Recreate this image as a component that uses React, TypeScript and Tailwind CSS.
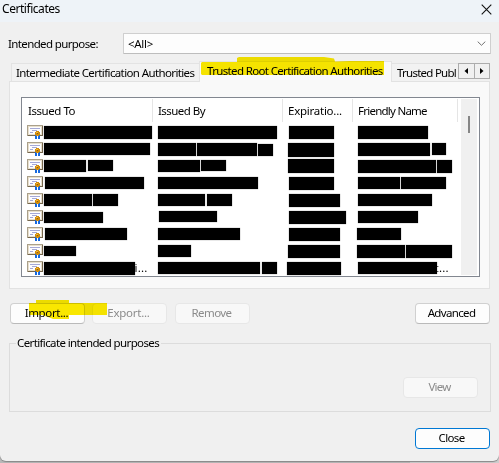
import type { ReactNode } from "react";

type Bar = [left: number, right: number, top: number, bottom: number];
type Row = { to: Bar[]; by: Bar[]; exp: Bar[]; name: Bar[]; toTail?: string; nameTail?: string };

const rows: Row[] = [
  { to: [[44, 152, 126, 139]], by: [[157.5, 277, 126, 138.6]], exp: [[289, 333.6, 126, 138.6]], name: [[358, 427.6, 126, 139]] },
  { to: [[44, 150, 143.4, 155.5]], by: [[157.5, 196.4, 143, 155.7], [197.5, 257.2, 143, 155.7], [258.4, 272.6, 144, 156]], exp: [[288.2, 334, 143, 157]], name: [[358, 430, 142.7, 155.6], [431.6, 446.4, 142.7, 155.5]] },
  { to: [[44, 85.8, 160, 171.7], [88, 112.8, 160, 171.4]], by: [[158, 200, 160.3, 171.7], [201, 226.4, 160, 171.4]], exp: [[288, 334.4, 159.4, 173.4]], name: [[357.6, 436, 159.6, 172.6], [437.4, 451.6, 160.4, 172.6]] },
  { to: [[45, 143.5, 176.6, 188.9]], by: [[157.6, 257.6, 176.6, 189.3]], exp: [[288.5, 333.5, 176.6, 190]], name: [[358, 399.5, 177, 189.4], [401, 446, 177, 189.4]] },
  { to: [[44, 92, 194, 205.8], [93.2, 118, 194, 205.6]], by: [[158, 205.3, 194, 205.8], [206.7, 232.4, 194, 206]], exp: [[288.5, 340, 194, 207]], name: [[358, 432.4, 194, 206]] },
  { to: [[44.4, 103, 211.5, 222.7]], by: [[158.5, 217, 211.3, 222.5]], exp: [[288.5, 346, 210.8, 223.7]], name: [[358, 417.7, 210.6, 223.3]] },
  { to: [[44.6, 126.6, 228.4, 239.8]], by: [[157.8, 240.5, 228.2, 240.3]], exp: [[288.5, 340, 228, 241.3]], name: [[357, 401, 228, 240.4]] },
  { to: [[44, 75.6, 245.8, 256.3]], by: [[158.4, 190.9, 245, 256.7]], exp: [[287.5, 340.2, 244.6, 258]], name: [[357, 404.8, 245.2, 258], [406.2, 452, 245.2, 258.4]] },
  { to: [[44, 134.5, 262, 274.5]], by: [[157.6, 260.5, 261.6, 274.4], [262.2, 277.4, 261.6, 274.4]], exp: [[287, 341, 262, 275]], name: [[358, 436.6, 262, 274.4]], toTail: "i...", nameTail: "t..." },
];

function Bars({ bars, from, top }: { bars: Bar[]; from: number; top: number }) {
  return (
    <>
      {bars.map((b, i) => (
        <i
          key={i}
          className="relative block shrink-0 bg-black shadow-[0_0_1px_#777]"
          style={{
            marginLeft: b[0] - (i === 0 ? from : bars[i - 1][1]),
            marginTop: b[2] - top,
            width: b[1] - b[0],
            height: b[3] - b[2],
          }}
        />
      ))}
    </>
  );
}

function CertIcon() {
  return (
    <svg width="16" height="15" viewBox="0 0 16 15" shapeRendering="crispEdges" className="mt-px ml-[5px] shrink-0">
      <rect width="16" height="11" fill="#aaa08b" />
      <path d="M15 1h1v10H1v-1h14z" fill="#75664d" />
      <rect x="1" y="1" width="14" height="9" fill="#e8dfcc" />
      <rect x="2" y="2" width="12" height="7" fill="#fdfdff" />
      <path d="M3 3h10v1H3zM5 5h5v1H5zM3 7h3v1H3z" fill="#a5a9d6" />
      <path d="M8 10h2v4H8zM11 10h2v4h-2z" fill="#1769df" />
      <path d="M9 6h3v1h1v3h-1v1H9v-1H8V7h1z" fill="#cf8b0d" />
      <path d="M9 7h2v1H9z" fill="#f1b52f" />
      <path d="M10 8h1v1h-1z" fill="#895b0b" />
    </svg>
  );
}

function Button({ children, kind = "normal", spacing = "" }: { children: ReactNode; kind?: "normal" | "off" | "default"; spacing?: string }) {
  const look =
    kind === "off"
      ? "border-[#e7e7e7] bg-[#f8f8f8] text-[#8b8b8b]"
      : kind === "default"
        ? "border-[#0078d4] bg-[#fdfdfd]"
        : "border-[#d0d0d0] border-b-[#bababa] bg-[#fdfdfd]";
  return (
    <button className={`flex h-[21px] w-[75px] shrink-0 items-center justify-center rounded-[4px] border pr-[2px] pb-px leading-none ${look} ${spacing}`}>
      {children}
    </button>
  );
}

export default function App() {
  return (
    <div className="relative h-[463px] w-[499px] overflow-hidden bg-[linear-gradient(90deg,#b9b9b9_0,#b9b9b9_410px,#cecece_410px)] font-['Noto_Sans',sans-serif] text-[11.5px] leading-[14px] whitespace-nowrap text-black">
      <main className="flex h-[461px] flex-col rounded-b-[6px] bg-[#f0f0f0] shadow-[0_1px_1px_#888]">
        <header className="flex h-[22px] shrink-0 items-start justify-between bg-[#eef3f8] pr-[7px] pl-[2px]">
          <h1 className="mt-[2px] text-[12px] tracking-[-0.45px]">Certificates</h1>
          <svg width="11" height="11" viewBox="0 0 11 11" className="mt-[4px]">
            <path d="M.7.7l9.6 9.6M10.3.7L.7 10.3" stroke="#111" strokeWidth="1.1" />
          </svg>
        </header>

        <div className="mt-[11px] flex h-[21px] shrink-0 pr-[8px] pl-[8px]">
          <label className="mt-[4px] w-[115px] tracking-[-0.62px]">Intended purpose:</label>
          <div className="flex h-[21px] flex-1 items-center justify-between rounded-[1px] border border-[#cfcfcf] border-b-[#bdbdbd] bg-[#fdfdfd] pr-[4px] pl-[4px]">
            <span className="tracking-[-0.3px]">&lt;All&gt;</span>
            <svg width="9" height="5" viewBox="0 0 9 5">
              <path d="M.7.6L4.5 4.3 8.3.6" fill="none" stroke="#707070" />
            </svg>
          </div>
        </div>

        <nav className="relative z-10 -mb-px ml-[11px] mt-[7px] flex h-[21px] shrink-0 items-end">
          <div className="mb-px h-[18px] w-[189px] border border-b-0 border-[#e3e3e3] bg-[#f2f2f2] pt-[2px] pl-[4px] tracking-[-0.62px]">Intermediate Certification Authorities</div>
          <div className="-ml-px h-[21px] w-[193px] border-x border-t border-[#e3e3e3] bg-[#f9f9f9] pt-[2px] pl-[7px] tracking-[-0.65px]">Trusted Root Certification Authorities</div>
          <div className="mb-px h-[18px] w-[66px] border-t border-[#e3e3e3] bg-[#f2f2f2] pt-[2px] pl-[5px] tracking-[-0.75px]">Trusted Publ</div>
          <div className="mb-[3px] flex h-[16px] w-[32px] shrink-0 divide-x divide-[#acacac] border border-[#acacac] bg-[#f0f0f0]">
            <span className="flex w-[16px] items-center justify-center"><svg width="4" height="6"><path d="M4 0v6L.5 3z" /></svg></span>
            <span className="flex w-[15px] items-center justify-center"><svg width="4" height="6"><path d="M0 0v6l3.5-3z" /></svg></span>
          </div>
        </nav>

        <section className="ml-[9px] h-[208px] w-[481px] shrink-0 border border-[#e2e2e2] bg-[#f9f9f9] pt-[15px] pl-[11px]">
          <div className="flex h-[180px] w-[459px] overflow-hidden border border-[#828790] bg-white">
            <div className="w-[439px] shrink-0 overflow-hidden pt-px">
              <div className="flex h-[23px] items-center">
                <span className="h-full w-[131px] border-r border-[#e5e5e5] pt-[5px] pl-[6px] tracking-[-0.45px]">Issued To</span>
                <span className="h-full w-[130px] border-r border-[#e5e5e5] pt-[5px] pl-[5px] tracking-[-0.55px]">Issued By</span>
                <span className="h-full w-[70px] border-r border-[#e5e5e5] pt-[5px] pl-[5px] tracking-[-0.25px]">Expiratio...</span>
                <span className="h-full w-[105px] border-r border-[#e5e5e5] pt-[5px] pl-[5px] tracking-[-0.75px]">Friendly Name</span>
              </div>
              <div className="mt-[2px]">
                {rows.map((r, i) => {
                  const top = 124 + i * 17;
                  return (
                    <div key={i} className="flex h-[17px] items-start">
                      <div className="flex w-[131px] shrink-0 items-start"><CertIcon /><Bars bars={r.to} from={43} top={top} /><span className="mt-px tracking-[0.2px]">{r.toTail}</span></div>
                      <div className="flex w-[130px] shrink-0 items-start"><Bars bars={r.by} from={153} top={top} /></div>
                      <div className="flex w-[70px] shrink-0 items-start"><Bars bars={r.exp} from={283} top={top} /></div>
                      <div className="flex shrink-0 items-start"><Bars bars={r.name} from={353} top={top} /><span className="mt-px -ml-[2px] tracking-[0.2px]">{r.nameTail}</span></div>
                    </div>
                  );
                })}
              </div>
            </div>
            <div className="mt-px mb-px w-[16px] bg-[#f0f0f0] pt-[17px] pl-[7px]"><i className="block h-[17px] w-[2px] bg-[#868686]" /></div>
          </div>
        </section>

        <div className="mt-[14px] flex h-[21px] shrink-0 pl-[10px]">
          <Button><span className="tracking-[-0.35px]">Import...</span></Button>
          <Button kind="off" spacing="ml-[7px]"><span className="tracking-[-0.25px]">Export...</span></Button>
          <Button kind="off" spacing="ml-[8px]"><span className="tracking-[-0.6px]">Remove</span></Button>
          <Button spacing="ml-[165px]"><span className="tracking-[-0.65px]">Advanced</span></Button>
        </div>

        <fieldset className="mt-[12px] ml-[9px] h-[76px] w-[482px] shrink-0 border border-[#dcdcdc] pl-[6px]">
          <legend className="h-[14px] pr-[2px] pl-px tracking-[-0.62px]">Certificate intended purposes</legend>
          <div className="mt-[27px] ml-[387px]"><Button kind="off"><span className="tracking-[-0.75px]">View</span></Button></div>
        </fieldset>
        <div className="mt-[16px] ml-[415px]"><Button kind="default"><span className="tracking-[-0.65px]">Close</span></Button></div>
      </main>

      <svg width="499" height="463" className="pointer-events-none absolute inset-0 z-20 mix-blend-multiply">
        <path d="M201 63l1-1h35v-4l2-1h85l10 1.5 1 3 15-.5h34v14H202l-1-1z" fill="#fbe900" />
        <path d="M29 303h7v-3h33v3h38v12H69v4H53l-5-2-6-2H29z" fill="#fbe900" />
      </svg>
    </div>
  );
}
